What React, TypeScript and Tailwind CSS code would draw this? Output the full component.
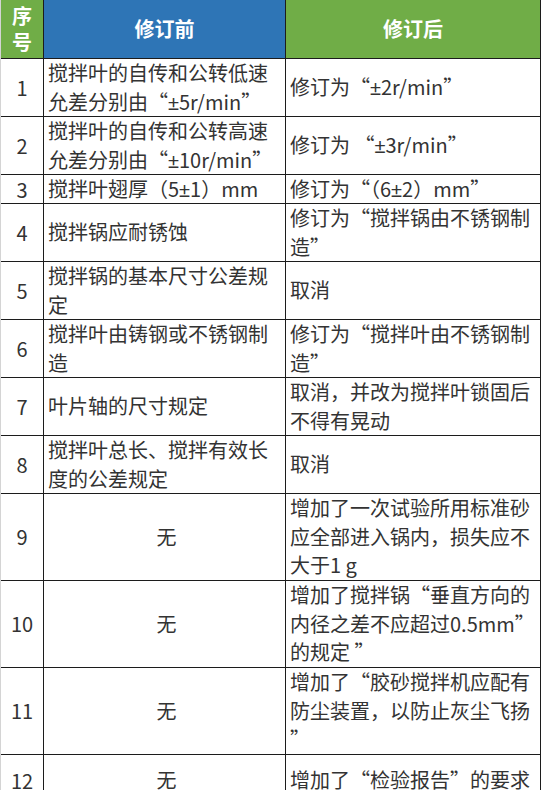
const FONT = { fontFamily: '"Noto Sans CJK SC", "Liberation Sans", sans-serif' }

type Row = {
  n: string
  before: string[]
  after: string[]
  h: string
  centerBefore?: boolean
}

const rows: Row[] = [
  { n: '1', before: ['搅拌叶的自传和公转低速', '允差分别由“±5r/min”'], after: ['修订为“±2r/min”'], h: 'h-[58px]' },
  { n: '2', before: ['搅拌叶的自传和公转高速', '允差分别由“±10r/min”'], after: ['修订为 “±3r/min”'], h: 'h-[58px]' },
  { n: '3', before: ['搅拌叶翅厚（5±1）mm'], after: ['修订为“（6±2）mm”'], h: 'h-[29px]' },
  { n: '4', before: ['搅拌锅应耐锈蚀'], after: ['修订为“搅拌锅由不锈钢制', '造”'], h: 'h-[58px]' },
  { n: '5', before: ['搅拌锅的基本尺寸公差规', '定'], after: ['取消'], h: 'h-[58px]' },
  { n: '6', before: ['搅拌叶由铸钢或不锈钢制', '造'], after: ['修订为“搅拌叶由不锈钢制', '造”'], h: 'h-[58px]' },
  { n: '7', before: ['叶片轴的尺寸规定'], after: ['取消，并改为搅拌叶锁固后', '不得有晃动'], h: 'h-[58px]' },
  { n: '8', before: ['搅拌叶总长、搅拌有效长', '度的公差规定'], after: ['取消'], h: 'h-[58px]' },
  { n: '9', before: ['无'], after: ['增加了一次试验所用标准砂', '应全部进入锅内，损失应不', '大于1 g'], h: 'h-[87px]', centerBefore: true },
  { n: '10', before: ['无'], after: ['增加了搅拌锅“垂直方向的', '内径之差不应超过0.5mm”', '的规定 ”'], h: 'h-[87px]', centerBefore: true },
  { n: '11', before: ['无'], after: ['增加了“胶砂搅拌机应配有', '防尘装置，以防止灰尘飞扬', '”'], h: 'h-[87px]', centerBefore: true },
  { n: '12', before: ['无'], after: ['增加了“检验报告”的要求'], h: 'h-[52px]', centerBefore: true },
]

// ± 在思源黑体里是全角，换成窄的拉丁字形
function Line({ text }: { text: string }) {
  const parts = text.split('±')
  return (
    <div>
      {parts.map((p, i) => (
        <span key={i}>
          {i > 0 && <span className="font-['Liberation_Sans']">±</span>}
          {p}
        </span>
      ))}
    </div>
  )
}

function Lines({ lines }: { lines: string[] }) {
  return (
    <div className="whitespace-pre leading-[28.5px]">
      {lines.map((l, i) => (
        <Line key={i} text={l} />
      ))}
    </div>
  )
}

export default function App() {
  return (
    <div className="min-h-screen overflow-hidden bg-white" style={FONT}>
      <div className="w-[541px] border-l border-l-[#d4d4d4] border-r border-r-[#1c1c1c]">
        {/* 表头 */}
        <div className="grid h-[59px] grid-cols-[43px_242px_1fr] border-b border-b-[#1c1c1c] text-[20px] font-bold text-white">
          <div className="flex flex-col items-center justify-center border-r border-r-[#1c1c1c] bg-[#70ad47]">
            <span className="leading-[26px]">序</span>
            <span className="leading-[26px]">号</span>
          </div>
          <div className="flex items-center justify-center border-r border-r-[#1c1c1c] bg-[#2e75b6]">
            修订前
          </div>
          <div className="flex items-center justify-center bg-[#70ad47]">修订后</div>
        </div>

        {rows.map((r) => (
          <div
            key={r.n}
            className={`grid grid-cols-[43px_242px_1fr] border-b border-b-[#1c1c1c] text-[20px] text-[#333333] ${r.h}`}
          >
            <div className="flex items-center justify-center border-r border-r-[#1c1c1c]">
              {r.n}
            </div>
            <div
              className={`flex items-center border-r border-r-[#1c1c1c] pl-[4px] ${
                r.centerBefore ? 'justify-center' : ''
              }`}
            >
              <Lines lines={r.before} />
            </div>
            <div className="flex items-center pl-[4px]">
              <Lines lines={r.after} />
            </div>
          </div>
        ))}
      </div>
    </div>
  )
}
